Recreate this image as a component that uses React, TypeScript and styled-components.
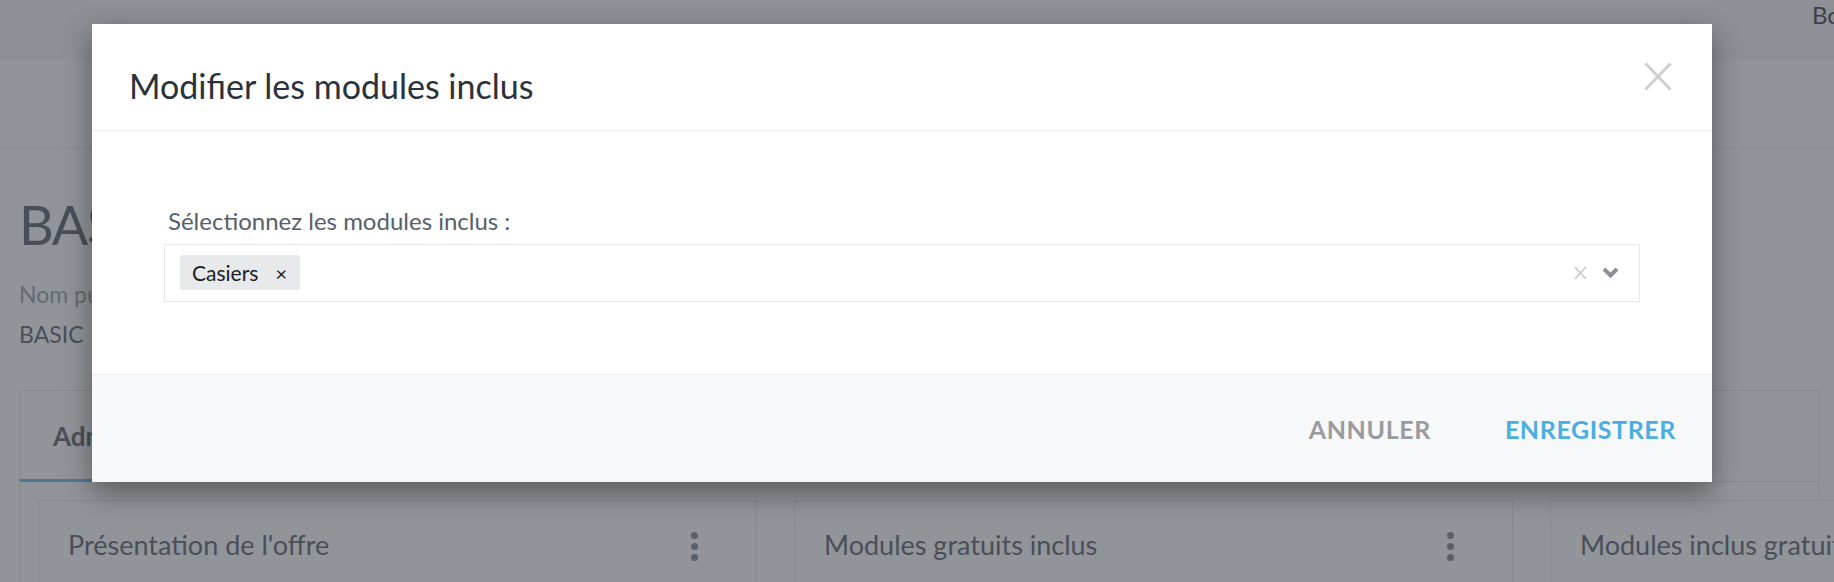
import React from "react";
import styled, { createGlobalStyle } from "styled-components";

const GlobalStyle = createGlobalStyle`
    html, body {
        margin: 0;
        padding: 0;
        width: 1834px;
        height: 582px;
        overflow: hidden;
        font-family: Lato, "Open Sans", sans-serif;
        background: #ffffff;
    }
    * { box-sizing: border-box; }
`

const Page = styled.div`
    width: 1834px;
    height: 582px;
    overflow: hidden;
    position: relative;
    background: #ffffff;
`

const TopBar = styled.header`
    height: 60px;
    display: flex;
    align-items: flex-start;
    padding-top: 1px;
    background: #f4f5f7;
`

const UserMenu = styled.div`
    margin-left: auto;
    width: 22px;
    white-space: nowrap;
    font-size: 24px;
    line-height: 1.2;
    color: #050608;
`

const SubBar = styled.div`
    height: 89px;
    background: #ffffff;
    border-bottom: 1px solid #e9ecef;
`

const Content = styled.main`
    padding: 0 19px;
`

const OfferTitle = styled.h1`
    margin: 44px 0 0;
    font-size: 54px;
    font-weight: 400;
    letter-spacing: -1.5px;
    line-height: 1.2;
    color: #2c3642;
`

const FieldLabel = styled.div<{ $muted?: boolean }>`
    margin-top: ${(p) => (p.$muted ? "23px" : "13px")};
    font-size: 23px;
    line-height: 1.2;
    color: ${(p) => (p.$muted ? "#7d8690" : "#2c3642")};
`

const TabPanel = styled.section`
    margin-top: 41px;
    border: 1px solid #dde1e6;
    width: 1800px;
`

const TabBar = styled.div`
    height: 91px;
    display: flex;
    border-bottom: 1px solid #dde1e6;
`

const Tab = styled.div<{ $active?: boolean }>`
    display: flex;
    align-items: center;
    padding: 3px 33px 0;
    font-size: 26px;
    font-weight: 700;
    color: #2c3642;
    border-bottom: 3px solid ${(p) => (p.$active ? "#3aa9e6" : "transparent")};
    margin-bottom: -1px;
`

const CardGrid = styled.div`
    display: grid;
    grid-template-columns: repeat(3, 719px);
    gap: 37px;
    padding: 18px;
`

const Card = styled.div`
    height: 200px;
    border: 1px solid #dde1e6;
    background: #ffffff;
    padding: 28px 58px 0 29px;
    display: flex;
    justify-content: space-between;
    align-items: flex-start;
`

const CardTitle = styled.h2`
    margin: 0;
    font-size: 27px;
    font-weight: 400;
    line-height: 1.2;
    color: #2c3642;
    white-space: nowrap;
`

const Kebab = styled.div`
    display: flex;
    flex-direction: column;
    gap: 4px;
    margin-top: 3px;

    span {
        width: 7px;
        height: 7px;
        border-radius: 50%;
        background: #5f6873;
    }
`

const Backdrop = styled.div`
    position: absolute;
    inset: 0;
    background: rgba(88, 92, 100, 0.66);
`

const Modal = styled.div`
    position: absolute;
    top: 24px;
    left: 92px;
    width: 1620px;
    background: #ffffff;
    box-shadow: 0 10px 28px rgba(0, 0, 0, 0.4);
    display: flex;
    flex-direction: column;
`

const ModalHeader = styled.div`
    height: 107px;
    padding: 42px 40px 0 37px;
    display: flex;
    justify-content: space-between;
    align-items: flex-start;
    border-bottom: 1px solid #eceef0;
`

const ModalTitle = styled.h3`
    margin: 0;
    font-size: 34px;
    font-weight: 400;
    line-height: 1.2;
    color: #2a323c;
`

const CloseButton = styled.button`
    margin-top: -4px;
    padding: 0;
    border: 0;
    background: none;
    width: 28px;
    height: 29px;
    display: flex;
    cursor: pointer;
`

const ModalBody = styled.div`
    height: 243px;
    padding: 76px 72px 0;
`

const SelectLabel = styled.label`
    display: block;
    padding-left: 4px;
    font-size: 24px;
    line-height: 1.2;
    color: #56606b;
`

const SelectBox = styled.div`
    margin-top: 8px;
    height: 58px;
    border: 1px solid #e6e7e9;
    display: flex;
    align-items: center;
    padding: 0 20px 0 15px;
`

const Chip = styled.div`
    height: 35px;
    padding: 0 13px 0 12px;
    border-radius: 3px;
    background: #e8e9eb;
    display: flex;
    align-items: center;
    gap: 17px;
    font-size: 21px;
    color: #1a1c1f;
`

const ChipRemove = styled.span`
    font-size: 20px;
    line-height: 1;
    color: #222;
`

const Indicators = styled.div`
    margin-left: auto;
    display: flex;
    align-items: center;
    gap: 15px;
`

const ModalFooter = styled.div`
    height: 108px;
    background: #f7f8fa;
    border-top: 1px solid #eceef0;
    display: flex;
    justify-content: flex-end;
    align-items: center;
    gap: 74px;
    padding-right: 36px;
`

const FooterButton = styled.button<{ $primary?: boolean }>`
    border: 0;
    padding: 0;
    background: none;
    font-family: inherit;
    font-size: 25px;
    font-weight: 700;
    letter-spacing: 0.6px;
    line-height: 1.2;
    text-transform: uppercase;
    color: ${(p) => (p.$primary ? "#4aaee0" : "#9a9b9e")};
    cursor: pointer;
`

const CloseIcon = () => (
    <svg width="28" height="29" viewBox="0 0 28 29">
        <path d="M1.5 1.5 L26.5 27.5 M26.5 1.5 L1.5 27.5" stroke="#cfcfcf" strokeWidth="3" fill="none" />
    </svg>
)

const ClearIcon = () => (
    <svg width="13" height="14" viewBox="0 0 13 14">
        <path d="M1 1 L12 13 M12 1 L1 13" stroke="#cccccc" strokeWidth="1.8" fill="none" />
    </svg>
)

const ChevronIcon = () => (
    <svg width="17" height="11" viewBox="0 0 17 11">
        <path d="M2 2 L8.5 8.5 L15 2" stroke="#8c8f94" strokeWidth="4" fill="none" strokeLinejoin="miter" />
    </svg>
)

const cards = ["Présentation de l'offre", "Modules gratuits inclus", "Modules inclus gratuitement"]

export default function App() {
    return (
        <Page>
            <GlobalStyle />
            <TopBar>
                <UserMenu>Bonjour Admin</UserMenu>
            </TopBar>
            <SubBar />
            <Content>
                <OfferTitle>BASIC</OfferTitle>
                <FieldLabel $muted>Nom public</FieldLabel>
                <FieldLabel>BASIC</FieldLabel>
                <TabPanel>
                    <TabBar>
                        <Tab $active>Administration</Tab>
                    </TabBar>
                    <CardGrid>
                        {cards.map((c) => (
                            <Card key={c}>
                                <CardTitle>{c}</CardTitle>
                                <Kebab>
                                    <span />
                                    <span />
                                    <span />
                                </Kebab>
                            </Card>
                        ))}
                    </CardGrid>
                </TabPanel>
            </Content>

            <Backdrop />
            <Modal>
                <ModalHeader>
                    <ModalTitle>Modifier les modules inclus</ModalTitle>
                    <CloseButton aria-label="Fermer">
                        <CloseIcon />
                    </CloseButton>
                </ModalHeader>
                <ModalBody>
                    <SelectLabel>Sélectionnez les modules inclus :</SelectLabel>
                    <SelectBox>
                        <Chip>
                            Casiers
                            <ChipRemove>×</ChipRemove>
                        </Chip>
                        <Indicators>
                            <ClearIcon />
                            <ChevronIcon />
                        </Indicators>
                    </SelectBox>
                </ModalBody>
                <ModalFooter>
                    <FooterButton>Annuler</FooterButton>
                    <FooterButton $primary>Enregistrer</FooterButton>
                </ModalFooter>
            </Modal>
        </Page>
    )
}
